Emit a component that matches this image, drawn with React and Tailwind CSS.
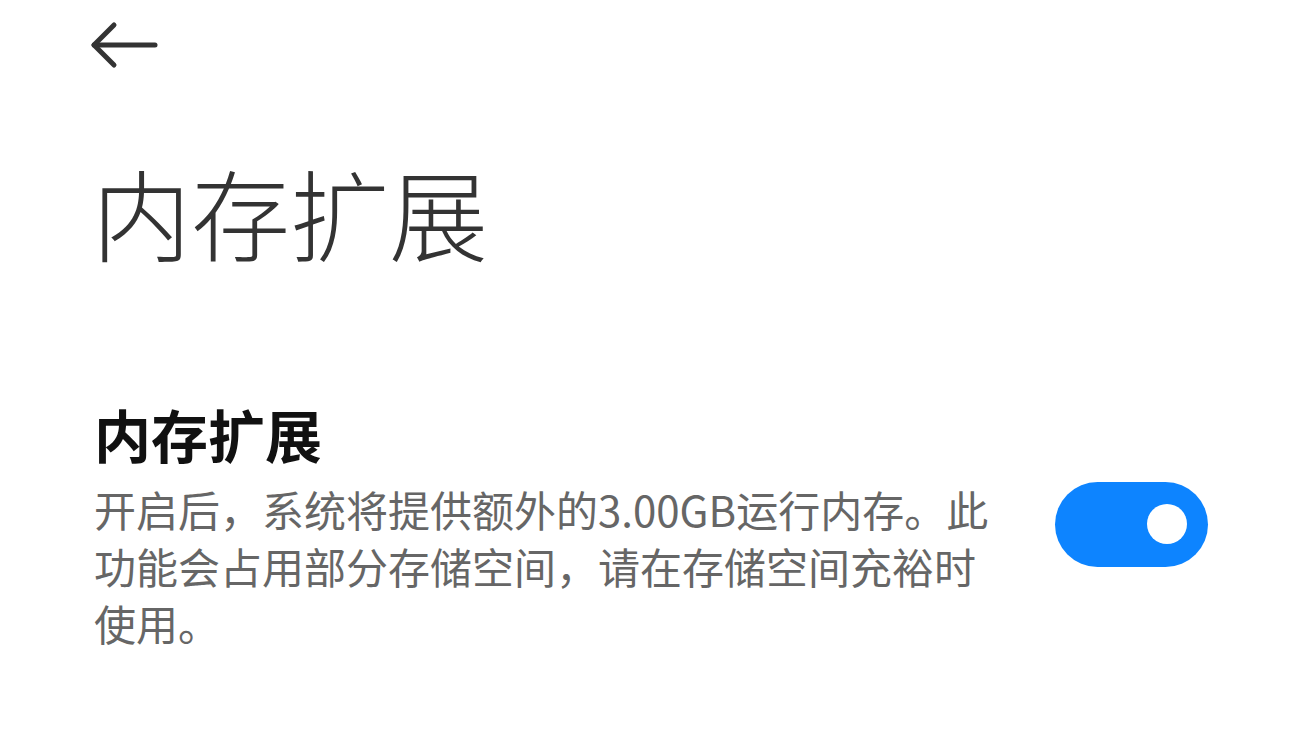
import { useState } from "react";

const cjk = { fontFamily: '"Noto Sans CJK SC", "Noto Sans", sans-serif' };

function BackArrow() {
  return (
    <svg width="72" height="50" viewBox="0 0 72 50" fill="none" stroke="#333" strokeWidth="5" strokeLinecap="round" strokeLinejoin="round">
      <path d="M6 25H67" />
      <path d="M26 5L6 25L26 45" />
    </svg>
  );
}

function Switch({ on, onChange }) {
  return (
    <button
      onClick={() => onChange(!on)}
      className={`flex h-[85px] w-[153px] shrink-0 items-center rounded-full px-[21px] ${on ? "justify-end bg-[#0d84ff]" : "justify-start bg-[#d9d9d9]"}`}
    >
      <span className="block h-[40px] w-[40px] rounded-full bg-white" />
    </button>
  );
}

export default function App() {
  const [enabled, setEnabled] = useState(true);

  return (
    <div className="min-h-screen w-full bg-white" style={cjk}>
      <div className="pl-[88px] pt-[20px]">
        <BackArrow />
      </div>

      <h1 className="mt-[82px] pl-[92px] text-[99px] font-light leading-[1.2] text-[#333]">内存扩展</h1>

      <div className="mt-[127px] flex items-center justify-between pl-[94px] pr-[92px]">
        <div className="w-[910px]">
          <div className="text-[57px] font-bold leading-[1.25] text-[#111]">内存扩展</div>
          <p className="mt-[11px] text-[42px] leading-[57px] text-[#666]">
            开启后，系统将提供额外的3.00GB运行内存。此功能会占用部分存储空间，请在存储空间充裕时使用。
          </p>
        </div>
        <Switch on={enabled} onChange={setEnabled} />
      </div>
    </div>
  );
}
